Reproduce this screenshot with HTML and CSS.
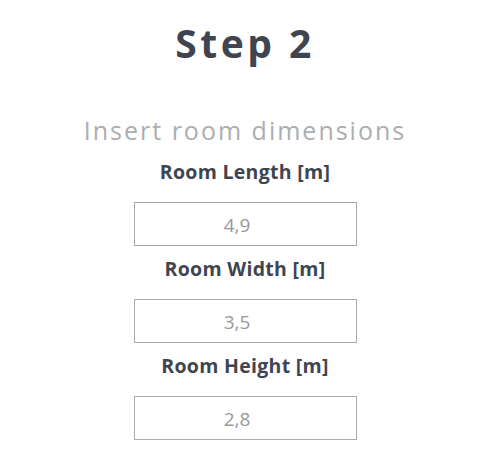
FILE: index.html
```html
<!DOCTYPE html>
<html lang="en">
<head>
    <meta charset="UTF-8">
    <meta name="viewport" content="width=device-width, initial-scale=1.0">
    <title>Step 2</title>
    <link rel="stylesheet" href="styles.css">
</head>
<body>
    <div class="step">
        <h1 class="step-title">Step 2</h1>
        <p class="step-hint">Insert room dimensions</p>

        <div class="field">
            <label for="roomLength">Room Length [m]</label>
            <input type="text" id="roomLength" value="4,9">
        </div>
        <div class="field">
            <label for="roomWidth">Room Width [m]</label>
            <input type="text" id="roomWidth" value="3,5">
        </div>
        <div class="field">
            <label for="roomHeight">Room Height [m]</label>
            <input type="text" id="roomHeight" value="2,8">
        </div>
    </div>
</body>
</html>
```

FILE: styles.css
```css
body {
    font-family: "Open Sans", Lato, sans-serif;
    background-color: #fff;
    color: #3f4550;
    margin: 0;
}
.step {
    display: flex;
    flex-direction: column;
    align-items: center;
    padding-top: 19px;
    padding-left: 3px;
}
.step-title {
    font-size: 39px;
    font-weight: 700;
    letter-spacing: 3.5px;
    line-height: 48px;
    margin: 0;
}
.step-hint {
    font-size: 25px;
    color: #aaaeb2;
    letter-spacing: 2px;
    line-height: 32px;
    margin: 47px 0 13px;
}
.field {
    display: flex;
    flex-direction: column;
    align-items: center;
}
.field label {
    font-size: 19.5px;
    font-weight: 700;
    letter-spacing: 0.3px;
    line-height: 26px;
    margin-bottom: 17px;
}
input[type="text"] {
    width: 223px;
    height: 44px;
    box-sizing: border-box;
    padding: 2px 16px 0 0;
    border: 1px solid #aaa;
    border-radius: 0;
    font-family: inherit;
    font-size: 19px;
    color: #999;
    text-align: center;
    margin-bottom: 10px;
}
.field:last-child input {
    margin-bottom: 0;
}
```
